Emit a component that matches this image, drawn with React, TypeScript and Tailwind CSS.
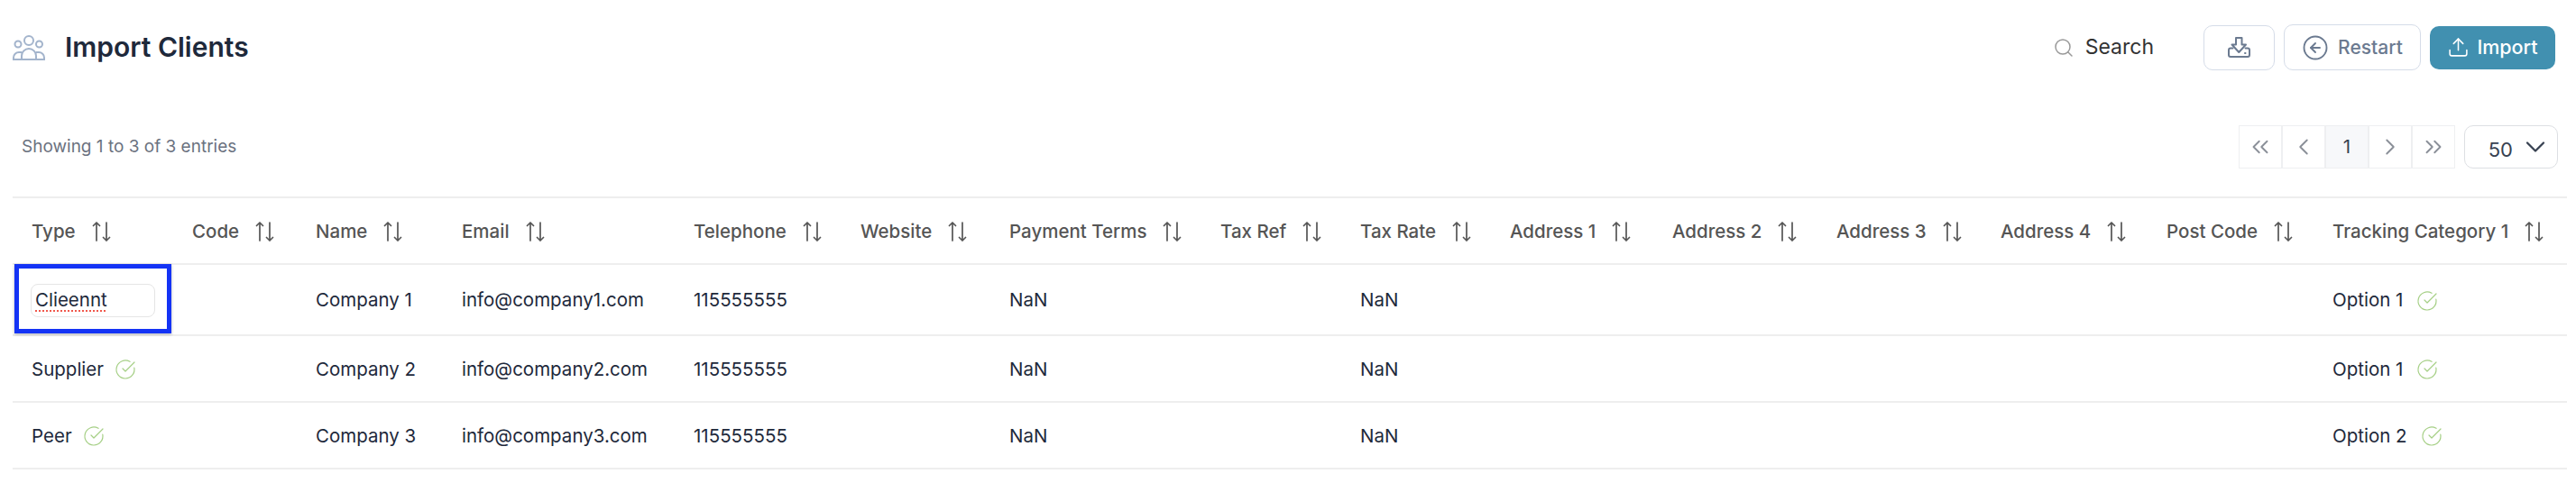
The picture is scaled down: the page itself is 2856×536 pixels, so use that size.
import { ChevronDown, ChevronLeft, ChevronRight, ChevronsLeft, ChevronsRight, CircleArrowLeft, CircleCheckBig, Search, Upload } from 'lucide-react';

const columns = [
  { label: 'Type', width: 'w-[178px]' },
  { label: 'Code', width: 'w-[137px]' },
  { label: 'Name', width: 'w-[162px]' },
  { label: 'Email', width: 'w-[257px]' },
  { label: 'Telephone', width: 'w-[185px]' },
  { label: 'Website', width: 'w-[165px]' },
  { label: 'Payment Terms', width: 'w-[234px]' },
  { label: 'Tax Ref', width: 'w-[155px]' },
  { label: 'Tax Rate', width: 'w-[166px]' },
  { label: 'Address 1', width: 'w-[180px]' },
  { label: 'Address 2', width: 'w-[182px]' },
  { label: 'Address 3', width: 'w-[182px]' },
  { label: 'Address 4', width: 'w-[184px]' },
  { label: 'Post Code', width: 'w-[184px]' },
  { label: 'Tracking Category 1', width: 'w-[281px]' },
];

const rows = [
  { type: 'Supplier', name: 'Company 2', email: 'info@company2.com', option: 'Option 1' },
  { type: 'Peer', name: 'Company 3', email: 'info@company3.com', option: 'Option 2' },
];

function SortIcon() {
  return (
    <svg width="21" height="22" viewBox="0 0 21 22" fill="none" stroke="#555555" strokeWidth="1.7" strokeLinecap="round" strokeLinejoin="round" className="shrink-0">
      <path d="M5 21V1M1.500 4.500 5 1l3.500 3.500" />
      <path d="M16 1v20M12.500 17.500 16 21l3.500-3.500" />
    </svg>
  );
}

function Check() {
  return <CircleCheckBig size={24} strokeWidth={1.2} className="shrink-0 text-[#a5cf85]" />;
}

function ClientsIcon() {
  return (
    <svg width="36" height="30" viewBox="0 0 36 30" fill="none" stroke="#a3b4cc" strokeWidth="2" className="shrink-0">
      <circle cx="18" cy="7" r="5" />
      <circle cx="6" cy="11" r="3.500" />
      <circle cx="29.500" cy="11" r="3.500" />
      <path d="M10 28v-4a8 8 0 0 1 16 0v4" />
      <path d="M10.500 20H7a6 6 0 0 0-6 6v2h34v-2a6 6 0 0 0-6-6h-3.500" />
    </svg>
  );
}

function TrayDownload() {
  return (
    <svg width="25" height="23" viewBox="0 0 25 23" fill="none" stroke="#6b7a90" strokeWidth="2" strokeLinejoin="round" strokeLinecap="round">
      <path d="M5.500 12.500H3a2 2 0 0 0-2 2V20a2 2 0 0 0 2 2h19a2 2 0 0 0 2-2v-5.500a2 2 0 0 0-2-2h-2.500" />
      <path d="M9 1h6.500v7.500h4.500L12.250 17 4.500 8.500H9z" />
      <path d="M19 18h.5" />
    </svg>
  );
}

function PageButton({ children, active }: { children: React.ReactNode; active?: boolean }) {
  return (
    <button className={`flex h-12 w-12 items-center justify-center border border-[#eeeff1] text-[#8a8f98] ${active ? 'bg-[#f7f8fa]' : 'bg-white'}`}>
      {children}
    </button>
  );
}

function HeaderCell({ label }: { label: string }) {
  return (
    <th className="pl-[21px] pt-[2px] text-left font-medium">
      <div className="flex items-center gap-[18px] whitespace-nowrap">
        <span>{label}</span>
        <SortIcon />
      </div>
    </th>
  );
}

function Row({ type, name, email, option }: { type: string; name: string; email: string; option: string }) {
  return (
    <tr className="h-[74px] border-b-2 border-[#eeeeee]">
      <td className="pl-[21px] pt-[2px]">
        <div className="flex items-center gap-[12px]">
          <span>{type}</span>
          <Check />
        </div>
      </td>
      <td />
      <td className="pl-[21px] pt-[2px]">{name}</td>
      <td className="pl-[21px] pt-[2px]">{email}</td>
      <td className="pl-[21px] pt-[2px]">115555555</td>
      <td />
      <td className="pl-[21px] pt-[2px]">NaN</td>
      <td />
      <td className="pl-[21px] pt-[2px]">NaN</td>
      <td />
      <td />
      <td />
      <td />
      <td />
      <td className="pl-[21px] pt-[2px]">
        <div className="flex items-center gap-[15px]">
          <span>{option}</span>
          <Check />
        </div>
      </td>
    </tr>
  );
}

export default function App() {
  return (
    <div className="h-[536px] w-[2856px] bg-white font-['Inter',sans-serif] text-[20.5px] text-[#1e293b]">
      <div className="flex items-center justify-between pl-[14px] pr-[23px] pt-[27px]">
        <div className="flex items-center gap-[22px]">
          <ClientsIcon />
          <h1 className="text-[30px] font-semibold text-[#1e293b]">Import Clients</h1>
        </div>
        <div className="flex items-center">
          <Search size={24} strokeWidth={1.5} className="text-[#999999]" />
          <span className="ml-[12px] mr-[55px] text-[23px] text-[#333333]">Search</span>
          <button className="flex h-[50px] w-[79px] items-center justify-center rounded-[10px] border-[1.5px] border-[#d5dce8] bg-white">
            <TrayDownload />
          </button>
          <button className="ml-[10px] flex h-[51px] w-[152px] items-center justify-center gap-[10px] rounded-[10px] border-[1.5px] border-[#d5dce8] bg-white text-[21px] font-medium text-[#6b7a90]">
            <CircleArrowLeft size={30} strokeWidth={1.5} />
            Restart
          </button>
          <button className="ml-[10px] flex h-[48px] w-[139px] items-center justify-center gap-[8px] rounded-[10px] bg-[#4190b0] text-[21.500px] font-medium text-white">
            <Upload size={25} strokeWidth={1.5} />
            Import
          </button>
        </div>
      </div>

      <div className="mt-[61px] flex items-center justify-between pl-[24px] pr-[20px]">
        <span className="mt-[1px] text-[19px] text-[#6b7280]">Showing 1 to 3 of 3 entries</span>
        <div className="flex items-center">
          <PageButton><ChevronsLeft size={30} strokeWidth={1.5} /></PageButton>
          <PageButton><ChevronLeft size={30} strokeWidth={1.5} /></PageButton>
          <PageButton active><span className="text-[#374151]">1</span></PageButton>
          <PageButton><ChevronRight size={30} strokeWidth={1.5} /></PageButton>
          <PageButton><ChevronsRight size={30} strokeWidth={1.5} /></PageButton>
          <button className="ml-[10px] flex h-12 w-[104px] items-center justify-end gap-[7px] rounded-[10px] border-[1.5px] border-[#dddfe3] pr-[6px] text-[22px] text-[#374151]">
            <span className="mt-[6px]">50</span>
            <ChevronDown size={36} strokeWidth={1.5} />
          </button>
        </div>
      </div>

      <div className="ml-[14px] mt-[31px]">
        <table className="w-[2832px] table-fixed border-collapse border-t-2 border-[#eeeeee]">
          <colgroup>
            {columns.map((col) => (
              <col key={col.label} className={col.width} />
            ))}
          </colgroup>
          <thead>
            <tr className="h-[74px] border-b-2 border-[#eeeeee] text-[#555555]">
              {columns.map((col) => (
                <HeaderCell key={col.label} label={col.label} />
              ))}
            </tr>
          </thead>
          <tbody>
            <tr className="h-[79px] border-b-2 border-[#eeeeee]">
              <td className="relative pl-[20px] pt-[2px]">
                <div className="flex h-[37px] w-[138px] items-center rounded-[8px] border-[1.5px] border-[#e5e5e5] pl-[4px]">
                  <span className="underline decoration-[#f0584c] decoration-dotted decoration-2 underline-offset-[4px]">Clieennt</span>
                </div>
                <div className="absolute -top-px bottom-[1px] left-[2px] right-[2px] border-[5px] border-[#1433f5] shadow-[0_1px_3px_rgba(0,0,0,0.3)]" />
              </td>
              <td />
              <td className="pl-[21px] pt-[2px]">Company 1</td>
              <td className="pl-[21px] pt-[2px]">info@company1.com</td>
              <td className="pl-[21px] pt-[2px]">115555555</td>
              <td />
              <td className="pl-[21px] pt-[2px]">NaN</td>
              <td />
              <td className="pl-[21px] pt-[2px]">NaN</td>
              <td />
              <td />
              <td />
              <td />
              <td />
              <td className="pl-[21px] pt-[2px]">
                <div className="flex items-center gap-[15px]">
                  <span>Option 1</span>
                  <Check />
                </div>
              </td>
            </tr>
            {rows.map((row) => (
              <Row key={row.name} {...row} />
            ))}
          </tbody>
        </table>
      </div>
    </div>
  );
}
